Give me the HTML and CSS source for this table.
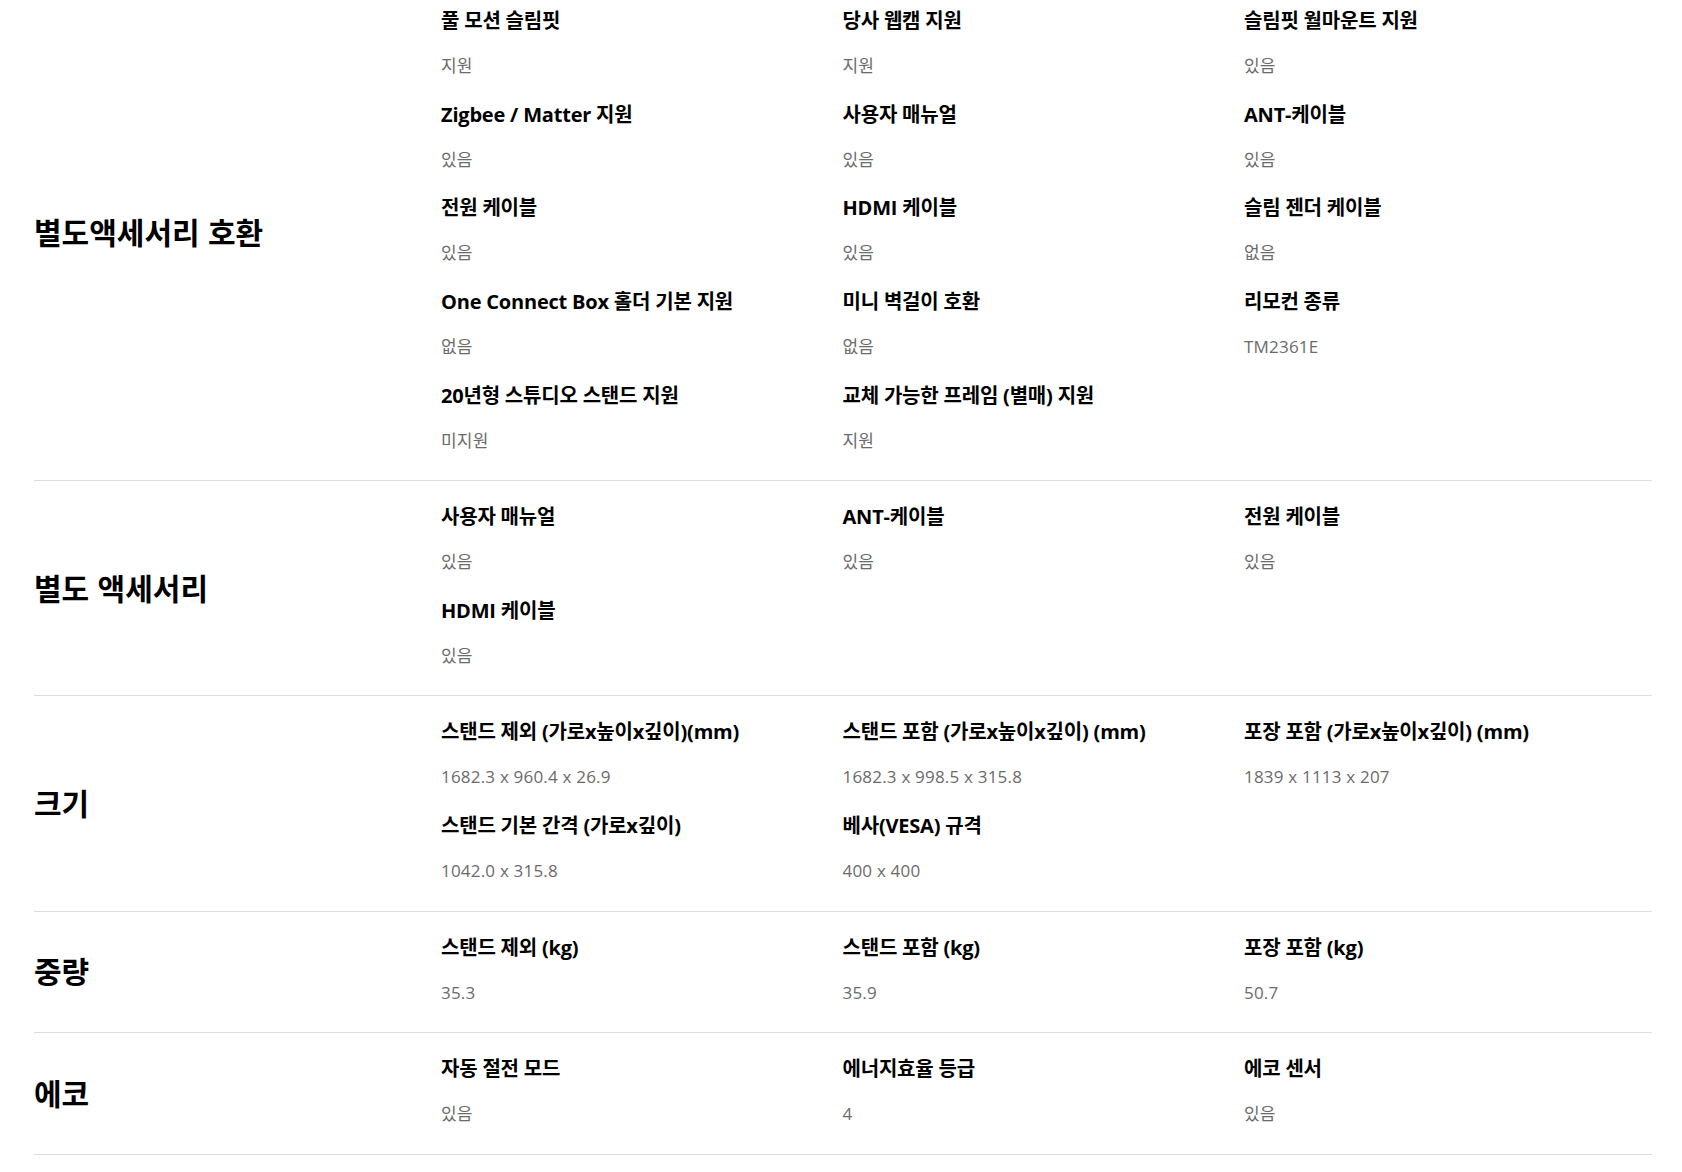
FILE: index.html
```html
<!DOCTYPE html>
<html lang="ko">
<head>
<meta charset="utf-8">
<title>사양</title>
<link rel="stylesheet" href="styles.css">
</head>
<body>
<div class="spec">
  <section class="spec-row">
    <h3 class="spec-title">별도액세서리 호환</h3>
    <ul class="spec-items">
      <li class="spec-item"><p class="spec-label">풀 모션 슬림핏</p><p class="spec-value">지원</p></li>
      <li class="spec-item"><p class="spec-label">당사 웹캠 지원</p><p class="spec-value">지원</p></li>
      <li class="spec-item"><p class="spec-label">슬림핏 월마운트 지원</p><p class="spec-value">있음</p></li>
      <li class="spec-item"><p class="spec-label">Zigbee / Matter 지원</p><p class="spec-value">있음</p></li>
      <li class="spec-item"><p class="spec-label">사용자 매뉴얼</p><p class="spec-value">있음</p></li>
      <li class="spec-item"><p class="spec-label">ANT-케이블</p><p class="spec-value">있음</p></li>
      <li class="spec-item"><p class="spec-label">전원 케이블</p><p class="spec-value">있음</p></li>
      <li class="spec-item"><p class="spec-label">HDMI 케이블</p><p class="spec-value">있음</p></li>
      <li class="spec-item"><p class="spec-label">슬림 젠더 케이블</p><p class="spec-value">없음</p></li>
      <li class="spec-item"><p class="spec-label">One Connect Box 홀더 기본 지원</p><p class="spec-value">없음</p></li>
      <li class="spec-item"><p class="spec-label">미니 벽걸이 호환</p><p class="spec-value">없음</p></li>
      <li class="spec-item"><p class="spec-label">리모컨 종류</p><p class="spec-value">TM2361E</p></li>
      <li class="spec-item"><p class="spec-label">20년형 스튜디오 스탠드 지원</p><p class="spec-value">미지원</p></li>
      <li class="spec-item"><p class="spec-label">교체 가능한 프레임 (별매) 지원</p><p class="spec-value">지원</p></li>
    </ul>
  </section>
  <section class="spec-row">
    <h3 class="spec-title">별도 액세서리</h3>
    <ul class="spec-items">
      <li class="spec-item"><p class="spec-label">사용자 매뉴얼</p><p class="spec-value">있음</p></li>
      <li class="spec-item"><p class="spec-label">ANT-케이블</p><p class="spec-value">있음</p></li>
      <li class="spec-item"><p class="spec-label">전원 케이블</p><p class="spec-value">있음</p></li>
      <li class="spec-item"><p class="spec-label">HDMI 케이블</p><p class="spec-value">있음</p></li>
    </ul>
  </section>
  <section class="spec-row">
    <h3 class="spec-title">크기</h3>
    <ul class="spec-items">
      <li class="spec-item"><p class="spec-label">스탠드 제외 (가로x높이x깊이)(mm)</p><p class="spec-value">1682.3 x 960.4 x 26.9</p></li>
      <li class="spec-item"><p class="spec-label">스탠드 포함 (가로x높이x깊이) (mm)</p><p class="spec-value">1682.3 x 998.5 x 315.8</p></li>
      <li class="spec-item"><p class="spec-label">포장 포함 (가로x높이x깊이) (mm)</p><p class="spec-value">1839 x 1113 x 207</p></li>
      <li class="spec-item"><p class="spec-label">스탠드 기본 간격 (가로x깊이)</p><p class="spec-value">1042.0 x 315.8</p></li>
      <li class="spec-item"><p class="spec-label">베사(VESA) 규격</p><p class="spec-value">400 x 400</p></li>
    </ul>
  </section>
  <section class="spec-row">
    <h3 class="spec-title">중량</h3>
    <ul class="spec-items">
      <li class="spec-item"><p class="spec-label">스탠드 제외 (kg)</p><p class="spec-value">35.3</p></li>
      <li class="spec-item"><p class="spec-label">스탠드 포함 (kg)</p><p class="spec-value">35.9</p></li>
      <li class="spec-item"><p class="spec-label">포장 포함 (kg)</p><p class="spec-value">50.7</p></li>
    </ul>
  </section>
  <section class="spec-row">
    <h3 class="spec-title">에코</h3>
    <ul class="spec-items">
      <li class="spec-item"><p class="spec-label">자동 절전 모드</p><p class="spec-value">있음</p></li>
      <li class="spec-item"><p class="spec-label">에너지효율 등급</p><p class="spec-value">4</p></li>
      <li class="spec-item"><p class="spec-label">에코 센서</p><p class="spec-value">있음</p></li>
    </ul>
  </section>
</div>
</body>
</html>
```
FILE: styles.css
```css
html, body {
  margin: 0;
  padding: 0;
  background: #fff;
}

body {
  font-family: "Open Sans", "Noto Sans CJK KR", sans-serif;
  color: #000;
  overflow: hidden;
}

.spec {
  margin-top: -15px;
  padding: 0 30px 0 34px;
}

.spec-row {
  display: grid;
  grid-template-columns: 407px 1fr;
  align-items: center;
  padding: 22px 0 25.5px;
  border-bottom: 1px solid #dddddd;
}

.spec-title {
  margin: 0;
  font-family: "Noto Sans CJK KR", sans-serif;
  font-size: 30px;
  font-weight: 700;
  line-height: 38px;
  letter-spacing: 0;
  color: #000;
}

.spec-items {
  list-style: none;
  margin: 0;
  padding: 0;
  display: grid;
  grid-template-columns: repeat(3, 401.5px);
  row-gap: 20.7px;
}

.spec-item {
  display: flex;
  flex-direction: column;
  gap: 17px;
}

.spec-label {
  margin: 0;
  font-size: 20px;
  font-weight: 700;
  line-height: 28px;
  letter-spacing: -0.2px;
  color: #000;
  white-space: nowrap;
}

.spec-value {
  margin: 0;
  font-size: 17px;
  font-weight: 400;
  line-height: 28px;
  letter-spacing: 0.2px;
  color: #6b6b6b;
  white-space: nowrap;
}
```
